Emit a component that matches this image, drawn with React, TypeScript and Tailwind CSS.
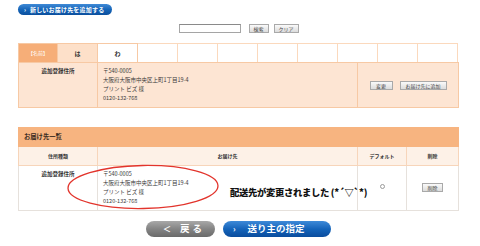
import React from "react";

const address = ["〒540-0005", "大阪府大阪市中央区上町1丁目19-4", "プリント ビズ 様", "0120-132-768"];

const GreyButton = ({ label, className = "" }: { label: string; className?: string }) => (
  <button
    className={`h-[9px] px-[4px] bg-gradient-to-b from-[#fafafa] to-[#dcdcdc] border border-[#a9a9a9] text-[5px] leading-none text-[#444] whitespace-nowrap ${className}`}
  >
    {label}
  </button>
);

const AddressLines = () => (
  <div className="text-[5.5px] leading-[9px] text-[#3a3a3a]">
    {address.map((line) => (
      <div key={line}>{line}</div>
    ))}
  </div>
);

export default function App() {
  const emptyCells = Array.from({ length: 8 });

  return (
    <div className="w-[480px] h-[246px] bg-white overflow-hidden font-['Noto_Sans_CJK_JP',sans-serif] text-[#333]">
      <div className="w-[459px] pl-[18px] pt-[4px]">
        {/* add new address */}
        <button className="flex items-center h-[11px] w-[94px] rounded-full bg-gradient-to-b from-[#3f8ad6] via-[#1565b8] to-[#0b4f9e] text-white pl-[6px] gap-[4px]">
          <span className="text-[6px] font-bold leading-none">›</span>
          <span className="text-[6px] font-bold leading-none tracking-[0.2px]">新しいお届け先を追加する</span>
        </button>

        {/* search */}
        <div className="mt-[9px] flex justify-center items-center">
          <input
            type="text"
            className="h-[9px] w-[62px] border border-[#a5a5a5] border-t-[#8a8a8a] bg-white"
          />
          <GreyButton label="検索" className="ml-[8px] w-[20px]" />
          <GreyButton label="クリア" className="ml-[5px] w-[25px]" />
        </div>

        {/* current table */}
        <div className="mt-[10px] w-[441px]">
          <div className="flex">
            <div className="w-[40px] h-[19px] border-t border-l border-r border-[#f7c9a4] bg-[#f6ae78] flex items-center justify-center text-[5px] text-white whitespace-nowrap">
              【名前】
            </div>
            <div className="w-[40px] h-[19px] border-t border-r border-[#f7c9a4] bg-[#fde0c9] flex items-center justify-center text-[6px] font-bold">
              は
            </div>
            <div className="w-[40px] h-[19px] border-t border-r border-[#f7c9a4] bg-white flex items-center justify-center text-[6px] font-bold">
              わ
            </div>
            {emptyCells.map((_, i) => (
              <div key={i} className="w-[40px] h-[19px] border-t border-r border-[#fbd9bd] bg-white" />
            ))}
          </div>
          <div className="flex h-[46px] bg-[#fde5d3] border border-[#f7c9a4]">
            <div className="w-[79px] pt-[4px] text-center text-[5.5px] leading-[9px] font-bold border-r border-[#f7c9a4]">
              追加登録住所
            </div>
            <div className="w-[260px] pl-[5px] pt-[4px] border-r border-[#f7c9a4]">
              <AddressLines />
            </div>
            <div className="flex-1 flex items-center justify-center gap-[7px]">
              <GreyButton label="変更" className="w-[23px]" />
              <GreyButton label="お届け先に追加" className="w-[47px]" />
            </div>
          </div>
        </div>

        {/* delivery list */}
        <div className="relative mt-[19px] w-[441px]">
          <div className="h-[20px] bg-[#f7b480] flex items-center pl-[6px] text-[6.3px] font-bold text-[#3a2a20]">
            お届け先一覧
          </div>
          <div className="flex h-[19px] bg-[#fdf1e7] border-x border-b border-[#f7d5ba] text-[5px] font-bold">
            <div className="w-[79px] flex items-center justify-center border-r border-[#f7d5ba]">住所種類</div>
            <div className="w-[260px] flex items-center justify-center border-r border-[#f7d5ba]">お届け先</div>
            <div className="w-[49px] flex items-center justify-center border-r border-[#f7d5ba]">デフォルト</div>
            <div className="flex-1 flex items-center justify-center">削除</div>
          </div>
          <div className="flex h-[45px] bg-white border-x border-b border-[#e6e1dc]">
            <div className="w-[79px] pt-[4px] text-center text-[5.5px] leading-[9px] font-bold border-r border-[#e6e1dc]">
              追加登録住所
            </div>
            <div className="w-[260px] pl-[5px] pt-[4px] border-r border-[#e6e1dc]">
              <AddressLines />
            </div>
            <div className="w-[49px] flex items-center justify-center pb-[3px] border-r border-[#e6e1dc]">
              <span className="block w-[5px] h-[5px] rounded-full border border-[#9a9a9a] bg-white" />
            </div>
            <div className="flex-1 flex items-center justify-center pb-[2px]">
              <GreyButton label="削除" className="w-[21px]" />
            </div>
          </div>

          {/* annotation */}
          <svg className="absolute left-[48px] top-[36px]" width="158" height="48" viewBox="0 0 158 48">
            <ellipse cx="77" cy="24" rx="75" ry="21.5" fill="none" stroke="#e2342c" strokeWidth="1.3" transform="rotate(-1 77 24)" />
          </svg>
          <div className="absolute left-[212px] top-[58px] text-[9.3px] leading-[14px] font-black text-[#111] whitespace-nowrap tracking-[-0.3px]">
            配送先が変更されました (*´▽`*)
          </div>
        </div>

        {/* navigation */}
        <div className="mt-[10px] w-[441px] flex justify-center gap-[8px]">
          <button className="h-[16px] w-[69px] rounded-full bg-gradient-to-b from-[#a8a8a8] via-[#848484] to-[#6a6a6a] text-white flex items-center pl-[17px] gap-[9px]">
            <span className="text-[8px] font-bold leading-none">＜</span>
            <span className="text-[9.5px] font-bold leading-none tracking-[3px]">戻る</span>
          </button>
          <button className="h-[16px] w-[108px] rounded-full bg-gradient-to-b from-[#3d8ad8] via-[#1464ba] to-[#0a4c9d] text-white flex items-center pl-[10px] gap-[12px]">
            <span className="text-[8px] font-bold leading-none">›</span>
            <span className="text-[9.5px] font-bold leading-none">送り主の指定</span>
          </button>
        </div>
      </div>
    </div>
  );
}
